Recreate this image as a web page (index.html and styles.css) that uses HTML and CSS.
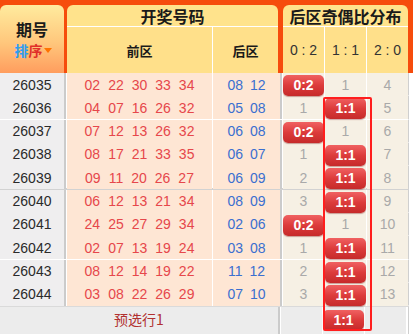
FILE: index.html
```html
<!DOCTYPE html>
<html lang="zh">
<head>
<meta charset="utf-8">
<title>后区奇偶比分布</title>
<link rel="stylesheet" href="styles.css">
</head>
<body>
<div class="board">
  <div class="head">
    <div class="h-id">
      <div class="h-id-title">期号</div>
      <div class="sort"><span class="s1">排</span><span class="s2">序</span><span class="tri"></span></div>
    </div>
    <div class="h-kj">
      <div class="h-title">开奖号码</div>
      <div class="h-sub">
        <div class="sub-front">前区</div>
        <div class="sub-back">后区</div>
      </div>
    </div>
    <div class="h-dist">
      <div class="h-title">后区奇偶比分布</div>
      <div class="h-sub">
        <div class="sub-d">0 : 2</div>
        <div class="sub-d">1 : 1</div>
        <div class="sub-d">2 : 0</div>
      </div>
    </div>
  </div>

  <div class="body">
    <div class="row">
      <div class="c-id">26035</div>
      <div class="c-front"><span>02</span><span>22</span><span>30</span><span>33</span><span>34</span></div>
      <div class="c-back"><span>08</span><span>12</span></div>
      <div class="c-d"><span class="badge">0:2</span></div>
      <div class="c-d">1</div>
      <div class="c-d">4</div>
    </div>
    <div class="row">
      <div class="c-id">26036</div>
      <div class="c-front"><span>04</span><span>07</span><span>16</span><span>26</span><span>32</span></div>
      <div class="c-back"><span>05</span><span>08</span></div>
      <div class="c-d">1</div>
      <div class="c-d"><span class="badge">1:1</span></div>
      <div class="c-d">5</div>
    </div>
    <div class="row">
      <div class="c-id">26037</div>
      <div class="c-front"><span>07</span><span>12</span><span>13</span><span>26</span><span>32</span></div>
      <div class="c-back"><span>06</span><span>08</span></div>
      <div class="c-d"><span class="badge">0:2</span></div>
      <div class="c-d">1</div>
      <div class="c-d">6</div>
    </div>
    <div class="row">
      <div class="c-id">26038</div>
      <div class="c-front"><span>08</span><span>17</span><span>21</span><span>33</span><span>35</span></div>
      <div class="c-back"><span>06</span><span>07</span></div>
      <div class="c-d">1</div>
      <div class="c-d"><span class="badge">1:1</span></div>
      <div class="c-d">7</div>
    </div>
    <div class="row row-group">
      <div class="c-id">26039</div>
      <div class="c-front"><span>09</span><span>11</span><span>20</span><span>26</span><span>27</span></div>
      <div class="c-back"><span>06</span><span>09</span></div>
      <div class="c-d">2</div>
      <div class="c-d"><span class="badge">1:1</span></div>
      <div class="c-d">8</div>
    </div>
    <div class="row">
      <div class="c-id">26040</div>
      <div class="c-front"><span>06</span><span>12</span><span>13</span><span>21</span><span>34</span></div>
      <div class="c-back"><span>08</span><span>09</span></div>
      <div class="c-d">3</div>
      <div class="c-d"><span class="badge">1:1</span></div>
      <div class="c-d">9</div>
    </div>
    <div class="row">
      <div class="c-id">26041</div>
      <div class="c-front"><span>24</span><span>25</span><span>27</span><span>29</span><span>34</span></div>
      <div class="c-back"><span>02</span><span>06</span></div>
      <div class="c-d"><span class="badge">0:2</span></div>
      <div class="c-d">1</div>
      <div class="c-d">10</div>
    </div>
    <div class="row">
      <div class="c-id">26042</div>
      <div class="c-front"><span>02</span><span>07</span><span>13</span><span>19</span><span>24</span></div>
      <div class="c-back"><span>03</span><span>08</span></div>
      <div class="c-d">1</div>
      <div class="c-d"><span class="badge">1:1</span></div>
      <div class="c-d">11</div>
    </div>
    <div class="row">
      <div class="c-id">26043</div>
      <div class="c-front"><span>08</span><span>12</span><span>14</span><span>19</span><span>22</span></div>
      <div class="c-back"><span>11</span><span>12</span></div>
      <div class="c-d">2</div>
      <div class="c-d"><span class="badge">1:1</span></div>
      <div class="c-d">12</div>
    </div>
    <div class="row">
      <div class="c-id">26044</div>
      <div class="c-front"><span>03</span><span>08</span><span>22</span><span>26</span><span>29</span></div>
      <div class="c-back"><span>07</span><span>10</span></div>
      <div class="c-d">3</div>
      <div class="c-d"><span class="badge">1:1</span></div>
      <div class="c-d">13</div>
    </div>
    <div class="foot">
      <div class="f-label">预选行1</div>
      <div class="f-d"></div>
      <div class="f-d"><span class="badge">1:1</span></div>
      <div class="f-d"></div>
    </div>
    <div class="pick-box"></div>
  </div>
</div>
</body>
</html>
```

FILE: styles.css
```css
* { box-sizing: border-box; }

html, body {
  margin: 0;
  padding: 0;
  background: #ffffff;
}

body {
  font-family: "Liberation Sans", Arial, "Noto Sans CJK SC", sans-serif;
  font-size: 14px;
  color: #333;
}

.board {
  width: 413px;
}

/* ---------- header ---------- */
.head {
  display: flex;
  background: #f64c0c;
  padding-top: 5px;
  height: 73px;
}

.h-id {
  width: 64px;
  margin-right: 3px;
  border-radius: 6px 6px 0 0;
  background: linear-gradient(#ffeb9e, #ffc77c 55%, #ff9d5e);
  display: flex;
  flex-direction: column;
  align-items: center;
}

.h-id-title {
  font-family: "Noto Sans CJK SC", sans-serif;
  font-weight: bold;
  font-size: 16px;
  color: #1a1a1a;
  line-height: 20px;
  margin-top: 14px;
}

.sort {
  display: flex;
  align-items: center;
  font-family: "Noto Sans CJK SC", sans-serif;
  font-weight: bold;
  font-size: 14px;
  line-height: 18px;
  margin-top: 2px;
  margin-left: 2px;
}

.s1 { color: #2b9cf2; }
.s2 { color: #e0302a; }

.tri {
  width: 0;
  height: 0;
  border-left: 4px solid transparent;
  border-right: 4px solid transparent;
  border-top: 5px solid #ff7200;
  margin-left: 1px;
  margin-top: 1px;
}

.h-kj {
  width: 211px;
  margin-right: 5px;
  border-radius: 6px 6px 0 0;
  background: #ffe38c;
  display: flex;
  flex-direction: column;
}

.h-dist {
  width: 125px;
  border-radius: 6px 6px 0 0;
  background: #ffe38c;
  display: flex;
  flex-direction: column;
}

.h-title {
  height: 22px;
  line-height: 22px;
  text-align: center;
  font-family: "Noto Sans CJK SC", sans-serif;
  font-weight: bold;
  font-size: 16px;
  color: #1a1a1a;
  border-bottom: 1px solid #ffffff;
}

.h-sub {
  flex: 1;
  display: flex;
  gap: 1px;
  background: #ffffff;
}

.sub-front,
.sub-back {
  background: #ffe08a;
  display: flex;
  align-items: center;
  justify-content: center;
  font-family: "Noto Sans CJK SC", sans-serif;
  font-weight: bold;
  font-size: 13px;
  color: #1a1a1a;
}

.sub-front { width: 145px; }
.sub-back { flex: 1; }

.sub-d {
  flex: 1;
  background: #ffe08a;
  display: flex;
  align-items: center;
  justify-content: center;
  font-size: 14px;
  color: #333;
}

/* ---------- body ---------- */
.body {
  position: relative;
  width: 413px;
}

.row,
.foot {
  display: grid;
  grid-template-columns: 66px 145px 69px 41px 41px 41px;
  column-gap: 1px;
  width: 409px;
  background: #ffffff;
  border-right: 1px solid #cfcfcf;
}

.row {
  height: 23.33px;
  border-bottom: 1px solid #ffffff;
}

.row.row-group {
  border-bottom: 2px solid #d2d2d2;
}

.c-id,
.c-front,
.c-back,
.c-d {
  display: flex;
  align-items: center;
  justify-content: center;
}

.c-id {
  background: #efeeef;
  border-right: 2px solid #cbcbcb;
  color: #2a2a2a;
  font-size: 14px;
}

.c-front {
  background: #fee6d4;
  color: #e6474b;
  gap: 8px;
}

.c-back {
  background: #fee6d4;
  color: #3b6fd0;
  gap: 7px;
  border-right: 2px solid #cbcbcb;
}

.c-d {
  background: #f6f0e4;
  color: #a9a9a9;
}

.badge {
  position: relative;
  z-index: 1;
  align-self: flex-start;
  margin-top: 2px;
  width: 41px;
  height: 21px;
  line-height: 21px;
  text-align: center;
  border-radius: 5px;
  color: #ffffff;
  font-weight: bold;
  font-size: 14px;
  background: linear-gradient(#f06161, #dc3b3b 50%, #c62a2a);
  box-shadow: 0 1px 1px rgba(120, 0, 0, 0.35);
}

/* ---------- footer ---------- */
.foot {
  height: 28px;
  grid-template-columns: 280px 41px 41px 41px;
  border-top: 1px solid #dadada;
}

.f-label {
  background: #ececec;
  border-right: 2px solid #cbcbcb;
  display: flex;
  align-items: center;
  justify-content: center;
  padding-bottom: 3px;
  color: #b1302f;
  font-family: "Noto Sans CJK SC", sans-serif;
  font-size: 14px;
}

.f-d {
  background: #ececec;
  display: flex;
  justify-content: center;
}

.f-d .badge {
  margin-top: 3px;
  height: 20px;
  line-height: 20px;
}

.pick-box {
  position: absolute;
  left: 323px;
  top: 24px;
  width: 49px;
  height: 234px;
  border: 2px solid #ff1e1e;
  border-radius: 2px;
  z-index: 2;
}
```
